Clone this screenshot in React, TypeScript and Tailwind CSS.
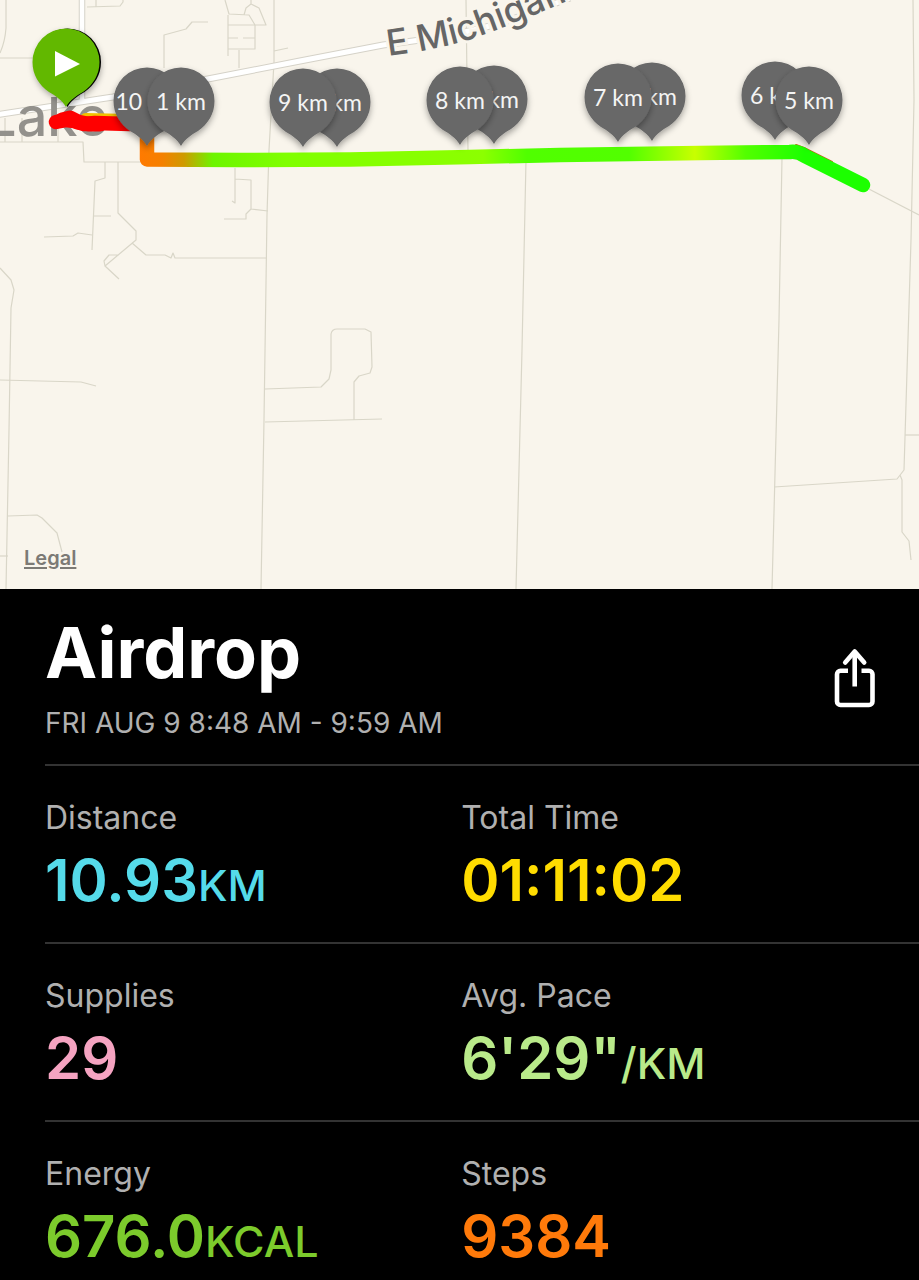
import React from 'react';

interface Marker {
  label: string;
  x: number;
  y: number;
}

interface Metric {
  label: string;
  value: string;
  unit?: string;
  color: string;
}

// x / y is the tip of the pin, later entries are painted on top
const markers: Marker[] = [
  { label: '10 km', x: 147, y: 146 },
  { label: '1 km', x: 181, y: 146 },
  { label: '2 km', x: 337, y: 147 },
  { label: '9 km', x: 303, y: 147 },
  { label: '3 km', x: 494, y: 144 },
  { label: '8 km', x: 460, y: 145 },
  { label: '4 km', x: 652, y: 141 },
  { label: '7 km', x: 618, y: 142 },
  { label: '6 km', x: 775, y: 140 },
  { label: '5 km', x: 809, y: 145 },
];

const metrics: Metric[][] = [
  [
    { label: 'Distance', value: '10.93', unit: 'KM', color: 'text-[#55dbea]' },
    { label: 'Total Time', value: '01:11:02', color: 'text-[#ffdc00]' },
  ],
  [
    { label: 'Supplies', value: '29', color: 'text-[#f5a3c1]' },
    { label: 'Avg. Pace', value: '6\'29"', unit: '/KM', color: 'text-[#b9ea8a]' },
  ],
  [
    { label: 'Energy', value: '676.0', unit: 'KCAL', color: 'text-[#7ccb2c]' },
    { label: 'Steps', value: '9384', color: 'text-[#ff7a0a]' },
  ],
];

const PIN =
  'M0 0C-4 -7 -10 -11 -17 -15C-27 -22 -33.5 -32 -33.5 -45A33.5 33.5 0 0 1 33.5 -45C33.5 -32 27 -22 17 -15C10 -11 4 -7 0 0Z';

const MAIN_ROAD = 'M-5 115L113 97L213 78L300 61L383 45L413 41Q470 33 510 20L570 -2';

const MINOR_ROADS = [
  // north west
  'M6 0V28Q5 42 0 53',
  'M0 58H33',
  'M87 7L120 6L123 2V0',
  'M96 0V7',
  'M164 68V35L186 29L192 22H208',
  'M225 0L229 14L249 15L255 25V49H228M228 56V15M228 25H266L259 8L251 4L246 8L244 15M251 0V4M228 38H238M243 38H255M239 50V68',
  'M274 0V62L269 150L267 215L264 420L261 589',
  'M274 51L288 48',
  'M5 118V142M22 118V142M58 118V142',
  'M0 142H83L84 162H140',
  // blocks south of the route
  'M105 162V178L95 181L92 250M94 216H111',
  'M44 237L73 236L78 233L92 235',
  'M118 162V213L136 231V240L105 266L119 279M105 266L104 261L109 255H119',
  'M132 243L146 255H165L171 258L173 253L175 258H267',
  'M235 168V203L232 201M235 179L251 180V209L268 211M251 209L246 214V219H224',
  'M0 268L11 280L14 290L11 308L9 430L6 589',
  'M0 380L81 382L96 386',
  'M8 516L37 515L42 518L57 533L62 552',
  'M0 556H8',
  'M265 389L321 387L329 379L331 370V334Q332 329 337 329H365L371 332L372 367L370 373L359 376L354 382V420',
  'M265 422L382 419',
  // east side
  'M466 0L467 80L468 150',
  'M526 160L522 350L516 589',
  'M782 158L779 320L772 589',
  'M913 0L914 100L911 240L904 470L897 479L774 487M900 475L902 480V532L909 541L911 560',
  'M905 435H919',
  'M865 187L919 215',
];

const ShareIcon: React.FC = () => (
  <svg width="42" height="60" viewBox="0 0 42 60" fill="none" stroke="currentColor" strokeWidth="4.6" aria-hidden="true">
    <path d="M14 22.800H6.500A3.500 3.500 0 0 0 3 26.300V53.500A3.500 3.500 0 0 0 6.500 57H35A3.500 3.500 0 0 0 38.500 53.500V26.300A3.500 3.500 0 0 0 35 22.800H27.500" />
    <path d="M20.700 3.500V38.500" />
    <path d="M11.200 14.500L20.700 3.500L30.200 14.500" strokeLinecap="round" strokeLinejoin="round" />
  </svg>
);

const RouteMap: React.FC = () => (
  <div className="relative bg-[#f9f5ec]">
    <svg viewBox="0 0 919 589" className="block h-auto w-full" role="img" aria-label="Route map">
      <defs>
        <linearGradient id="pace" gradientUnits="userSpaceOnUse" x1="140" y1="0" x2="870" y2="0">
          <stop offset="0" stopColor="#ff7a00" />
          <stop offset="0.03" stopColor="#f58000" />
          <stop offset="0.06" stopColor="#cf9a00" />
          <stop offset="0.1" stopColor="#6df500" />
          <stop offset="0.2" stopColor="#80ff00" />
          <stop offset="0.47" stopColor="#8cff00" />
          <stop offset="0.53" stopColor="#50ff00" />
          <stop offset="0.67" stopColor="#52ff00" />
          <stop offset="0.76" stopColor="#c8ff00" />
          <stop offset="0.83" stopColor="#52ff00" />
          <stop offset="0.91" stopColor="#1cff00" />
          <stop offset="1" stopColor="#1cff00" />
        </linearGradient>
        <filter id="shadow" x="-30%" y="-30%" width="160%" height="160%">
          <feDropShadow dx="0" dy="3" stdDeviation="3" floodColor="#000" floodOpacity="0.35" />
        </filter>
        <path id="street" d="M388 56Q440 49 468 40Q520 23 600 -14" />
      </defs>

      <g fill="none" stroke="#d9d6c8" strokeWidth="1.2" strokeLinejoin="round">
        {MINOR_ROADS.map((d) => (
          <path key={d} d={d} />
        ))}
      </g>
      <g fill="none">
        <path d="M82 -5V101" stroke="#d5d2c8" strokeWidth="6.5" />
        <path d={MAIN_ROAD} stroke="#d5d2c8" strokeWidth="7" />
        <path d="M82 -5V101" stroke="#fff" strokeWidth="4.5" />
        <path d={MAIN_ROAD} stroke="#fff" strokeWidth="5" />
      </g>

      <text x="108" y="136" textAnchor="end" className="fill-[#93918c] font-['Inter',sans-serif] text-[54px] font-medium">
        Lake
      </text>
      <text className="fill-[#666] stroke-[#f9f5ec] stroke-[6px] font-['Inter',sans-serif] text-[36px] font-medium [paint-order:stroke]">
        <textPath href="#street">E Michigan</textPath>
      </text>

      {/* recorded track, coloured by pace */}
      <g fill="none" strokeLinecap="round" strokeLinejoin="round">
        <path d="M86 120L130 121" stroke="#f2c200" strokeWidth="14" />
        <path d="M56 122L66 120L74 121L84 124L95 123L130 124" stroke="#f00" strokeWidth="14.5" />
        <path d="M62 120L70 118L78 122L88 124L100 124" stroke="#f00" strokeWidth="15" />
        <path d="M796 145L804 148L832 162" stroke="#e04a1c" strokeWidth="2" />
        <path
          d="M147 126V159.500L240 160L350 159.500L470 157L560 155L700 153L790 152Q798 151 805 156L863 185"
          stroke="url(#pace)"
          strokeWidth="14.500"
        />
      </g>

      {markers.map(({ label, x, y }) => (
        <g key={label} transform={`translate(${x} ${y})`}>
          <path d={PIN} fill="#676767" filter="url(#shadow)" />
          <text y="-36" textAnchor="middle" className="fill-[#f4f4f4] font-['Lato',sans-serif] text-[23px]">
            {label}
          </text>
        </g>
      ))}

      <g transform="translate(66 107)">
        <path d={PIN} transform="translate(1.500 0)" fill="#000" filter="url(#shadow)" />
        <path d={PIN} fill="#62b800" />
        <path d="M-11 -56L14 -43L-11 -30.500Z" fill="#fff" />
      </g>
    </svg>
    <a
      href="#legal"
      className="absolute bottom-4 left-6 text-[20px] leading-[30px] font-semibold text-[#7c7a75] underline underline-offset-2"
    >
      Legal
    </a>
  </div>
);

const MetricCell: React.FC<{ metric: Metric }> = ({ metric }) => (
  <div className="flex flex-col gap-2">
    <dt className="text-[32px] leading-[40px] text-[#b0b0b0]">{metric.label}</dt>
    <dd className={`text-[58px] leading-[68px] font-semibold whitespace-nowrap ${metric.color}`}>
      {metric.value}
      {metric.unit && <span className="text-[43px] leading-none font-medium">{metric.unit}</span>}
    </dd>
  </div>
);

export default function App() {
  return (
    <main className="bg-black font-['Inter',sans-serif]">
      <RouteMap />

      <section className="pl-[45px]">
        <header className="flex items-center justify-between pt-6 pr-[43px] pb-[21px]">
          <div>
            <h1 className="text-[70px] leading-[80px] font-bold text-white">Airdrop</h1>
            <p className="mt-2.5 text-[28px] leading-[40px] text-[#b0b0b0]">
              FRI AUG 9 8:48 AM - 9:59 AM
            </p>
          </div>
          <button type="button" aria-label="Share" className="text-white">
            <ShareIcon />
          </button>
        </header>

        {metrics.map((row) => (
          <dl
            key={row[0].label}
            className="grid grid-cols-[10fr_11fr] border-t-2 border-[#333] pt-8 pb-7"
          >
            {row.map((metric) => (
              <MetricCell key={metric.label} metric={metric} />
            ))}
          </dl>
        ))}
      </section>
    </main>
  );
}
